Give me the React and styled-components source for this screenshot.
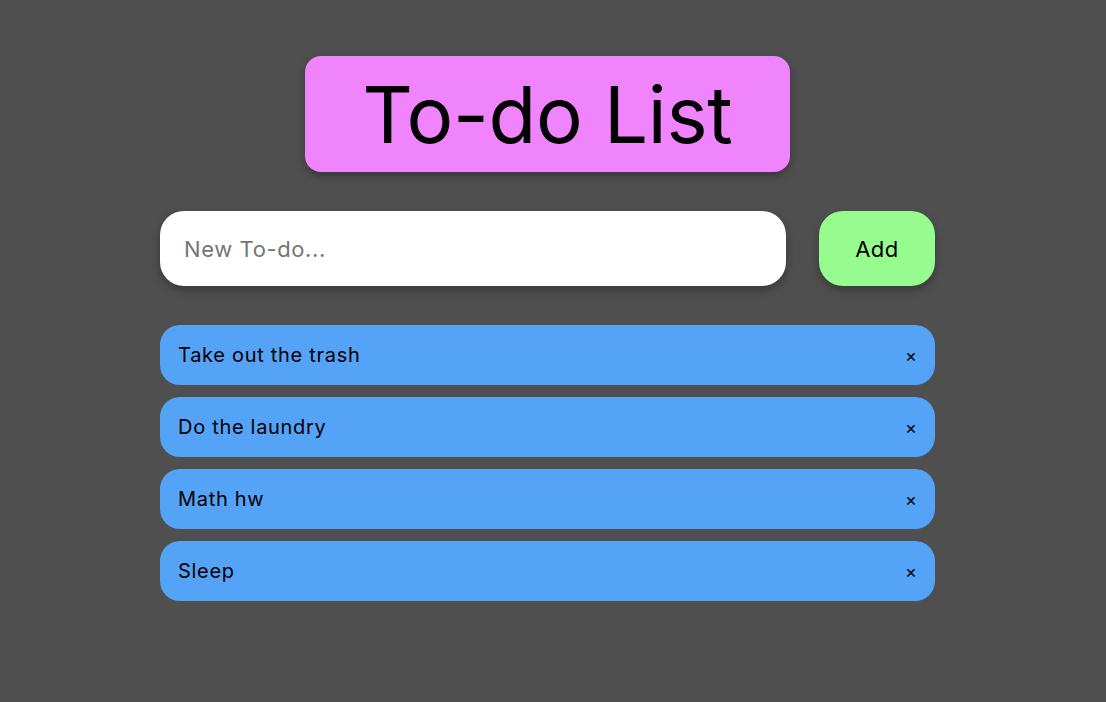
import React, { useState } from "react";
import styled, { createGlobalStyle } from "styled-components";

const GlobalStyle = createGlobalStyle`
  html, body {
    margin: 0;
    padding: 0;
    background: #4f4f4f;
    font-family: Inter, "Noto Sans", sans-serif;
  }
`;

const Page = styled.div`
  min-height: 702px;
  padding-top: 56px;
  box-sizing: border-box;
`;

const Column = styled.div`
  width: 775px;
  margin-left: 160px;
  display: flex;
  flex-direction: column;
  align-items: center;
`;

const Title = styled.h1`
  margin: 0;
  height: 116px;
  padding: 0 57px;
  box-sizing: border-box;
  display: flex;
  align-items: center;
  background: #f084fc;
  border-radius: 16px;
  font-size: 78px;
  font-weight: 400;
  letter-spacing: -0.3px;
  color: #000;
  box-shadow: 0 4px 8px rgba(0, 0, 0, 0.3);
`;

const Form = styled.form`
  width: 100%;
  margin-top: 39px;
  display: flex;
  justify-content: space-between;
`;

const Input = styled.input`
  width: 626px;
  height: 75px;
  box-sizing: border-box;
  border: none;
  outline: none;
  border-radius: 24px;
  padding: 0 24px;
  font-family: inherit;
  font-size: 22px;
  letter-spacing: 0.6px;
  color: #000;
  background: #fff;
  box-shadow: 0 4px 8px rgba(0, 0, 0, 0.3);

  &::placeholder {
    color: #757575;
  }
`;

const AddButton = styled.button`
  width: 116px;
  height: 75px;
  border: none;
  border-radius: 24px;
  background: #97fc90;
  font-family: inherit;
  font-size: 22px;
  letter-spacing: 0.5px;
  color: #000;
  cursor: pointer;
  box-shadow: 0 4px 8px rgba(0, 0, 0, 0.3);
`;

const List = styled.ul`
  list-style: none;
  margin: 39px 0 0;
  padding: 0;
  width: 100%;
  display: flex;
  flex-direction: column;
  gap: 12px;
`;

const Item = styled.li`
  height: 60px;
  box-sizing: border-box;
  display: flex;
  align-items: center;
  justify-content: space-between;
  padding: 0 18px;
  background: #54a3f7;
  border-radius: 20px;
  font-size: 20px;
  letter-spacing: 0.7px;
  color: #000;
`;

const RemoveButton = styled.button`
  border: none;
  background: none;
  padding: 0;
  font-family: inherit;
  font-size: 18px;
  color: #000;
  cursor: pointer;
`;

const App = () => {
  const [todos, setTodos] = useState([
    "Take out the trash",
    "Do the laundry",
    "Math hw",
    "Sleep",
  ]);
  const [value, setValue] = useState("");

  const addTodo = (e) => {
    e.preventDefault();
    if (!value.trim()) return;
    setTodos([...todos, value.trim()]);
    setValue("");
  };

  return (
    <>
      <GlobalStyle />
      <Page>
        <Column>
          <Title>To-do List</Title>
          <Form onSubmit={addTodo}>
            <Input
              placeholder="New To-do..."
              value={value}
              onChange={(e) => setValue(e.target.value)}
            />
            <AddButton type="submit">Add</AddButton>
          </Form>
          <List>
            {todos.map((todo, i) => (
              <Item key={i}>
                {todo}
                <RemoveButton
                  onClick={() => setTodos(todos.filter((_, j) => j !== i))}
                >
                  ×
                </RemoveButton>
              </Item>
            ))}
          </List>
        </Column>
      </Page>
    </>
  );
};

export default App;
